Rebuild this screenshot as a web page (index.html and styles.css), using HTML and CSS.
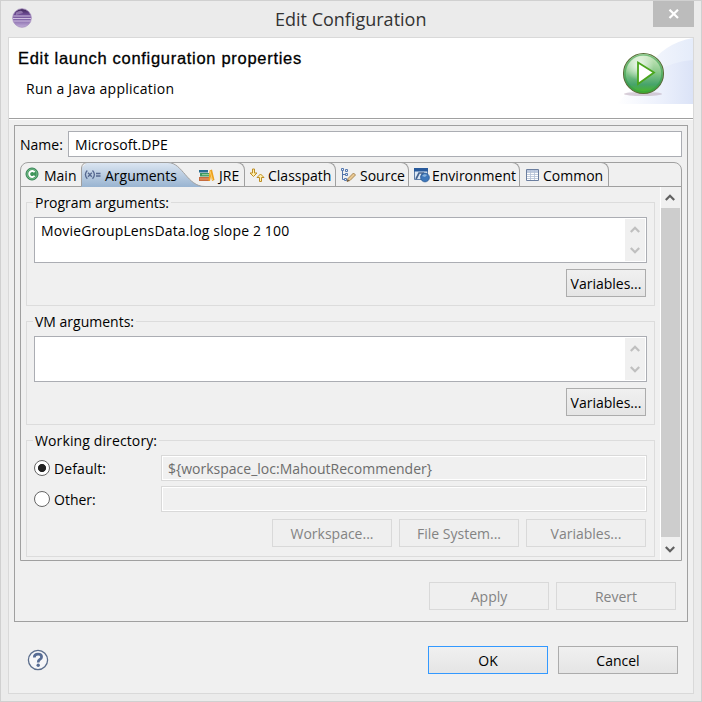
FILE: index.html
```
<!DOCTYPE html>
<html lang="en">
<head>
<meta charset="utf-8">
<title>Edit Configuration</title>
<link rel="stylesheet" href="styles.css">
</head>
<body>
<div class="window">
  <header class="titlebar">
    <svg class="app-icon" width="20" height="20" viewBox="0 0 20 20">
      <defs><linearGradient id="ecl" x1="0" y1="0" x2="0" y2="1"><stop offset="0" stop-color="#3d2456"/><stop offset=".3" stop-color="#6d4b93"/><stop offset=".65" stop-color="#8a6eae"/><stop offset="1" stop-color="#c3b0da"/></linearGradient></defs>
      <circle cx="10" cy="10" r="9.300" fill="url(#ecl)" stroke="#a58dbe" stroke-width=".8"/>
      <path d="M4 4.500Q10 1 11 5L4 7Z" fill="#a78dbd" opacity=".7"/>
      <path d="M1.500 8h17M1 10.500h18M1.500 13h17" stroke="#d9cbe8" stroke-width=".9"/>
    </svg>
    <h1 class="title"><span class="t-title">Edit Configuration</span></h1>
    <div class="close"><svg width="12" height="10" viewBox="0 0 12 10"><path d="M1.500 .7L10 9M10 .7L1.500 9" stroke="#fff" stroke-width="2.200"/></svg></div>
  </header>
  <main class="client">
    <section class="banner">
      <div class="banner-text">
        <h2><span class="t-head">Edit launch configuration properties</span></h2>
        <p><span class="t-run">Run a Java application</span></p>
      </div>
      <svg class="banner-art" width="76" height="66" viewBox="0 0 76 66">
        <defs>
          <linearGradient id="sweep" x1="0" y1="0" x2="1" y2="0"><stop offset="0" stop-color="#fff"/><stop offset=".55" stop-color="#edf1fc"/><stop offset="1" stop-color="#dbe3f7"/></linearGradient>
          <linearGradient id="sweep2" x1="0" y1="0" x2="1" y2="0"><stop offset=".3" stop-color="#f6f8fd"/><stop offset="1" stop-color="#e5ecfa"/></linearGradient>
          <linearGradient id="ball" x1="0" y1="0" x2="0" y2="1"><stop offset="0" stop-color="#d5edc7"/><stop offset=".45" stop-color="#8cca8d"/><stop offset=".78" stop-color="#46a36a"/><stop offset="1" stop-color="#4cba19"/></linearGradient>
          <radialGradient id="shine" cx=".38" cy=".3" r=".45"><stop offset="0" stop-color="#fff" stop-opacity=".85"/><stop offset="1" stop-color="#fff" stop-opacity="0"/></radialGradient>
        </defs>
        <path d="M30 30Q47 5 76 0V66H2Q20 55 30 30Z" fill="url(#sweep2)"/>
        <path d="M0 66Q35 25 76 22V66Z" fill="url(#sweep)"/>
        <ellipse cx="26" cy="56" rx="19" ry="2" fill="#b9a8b8" opacity=".55"/>
        <circle cx="26.500" cy="35.500" r="20" fill="url(#ball)" stroke="#596c38" stroke-width="1.100"/>
        <circle cx="26.500" cy="35.500" r="18.500" fill="none" stroke="#329c46" stroke-width="1.600" opacity=".55"/>
        <circle cx="26" cy="34" r="16.500" fill="url(#shine)"/>
        <path d="M21 24.500L37 34.500L21 46Z" fill="#fff" stroke="#4aa51c" stroke-width="1.800"/>
      </svg>
    </section>
    <section class="panel">
      <div class="name-row"><label><span class="t-name">Name:</span></label><div class="field name-field"><span class="t-ms">Microsoft.DPE</span></div></div>
      <div class="folder">
        <nav class="tabs">
          <div class="tab main">
            <svg width="14" height="14" viewBox="0 0 14 14"><circle cx="7" cy="7" r="6" fill="#3f965b" stroke="#2f8050"/><circle cx="7" cy="7" r="5" fill="none" stroke="#9bd0a8" stroke-width=".6"/><path d="M9.600 5.200A3 3 0 1 0 9.600 8.800" fill="none" stroke="#fff" stroke-width="1.900"/></svg>
            <span class="t-main">Main</span></div>
          <div class="tab active">
            <svg class="active-shape" width="124" height="25" viewBox="0 0 124 25">
              <defs><linearGradient id="tabfill" x1="0" y1="0" x2="0" y2="1"><stop offset="0" stop-color="#dce6f2"/><stop offset="1" stop-color="#99b4d1"/></linearGradient></defs>
              <path d="M.5 25V6L6 .5H89C101 2 107 24.500 124 24.500V25Z" fill="url(#tabfill)"/>
              <path d="M.5 24V6Q1 1 6 .5H87C102 1 106 24.500 124 24.500" fill="none" stroke="#a0a0a0"/>
            </svg>
            <svg class="var-icon" width="17" height="12" viewBox="0 0 17 12" fill="none" stroke="#566890" stroke-width="1.300"><path d="M3.300 1.500Q-.5 5.500 3.300 9.800M8.500 1.500Q12.300 5.500 8.500 9.800M4 3.700L7.800 7.800M7.800 3.700L4 7.800M12 4.500H16.500M12 7H16.500"/></svg>
            <span class="t-args">Arguments</span></div>
          <div class="tab jre">
            <svg width="16" height="14" viewBox="0 0 16 14"><path d="M0 9H11V13H0Z" fill="#c66b3e"/><path d="M1 5H10V8.500H1Z" fill="#3e9862"/><path d="M0 2H9V4.500H0Z" fill="#276c91"/><path d="M1 11H10" stroke="#e7a46f"/><path d="M3 6.700H10" stroke="#a7d7a1"/><path d="M10.500 2.500L13 1.500L15.500 12L13 13L12 8L11 13H9.500Z" fill="#eda11e"/><path d="M11 3L13.500 12" stroke="#ffd26a"/></svg>
            <span class="t-jre">JRE</span></div>
          <div class="tab cp">
            <svg width="16" height="15" viewBox="0 0 16 15" fill="#fff1b0" stroke="#be8d22"><path d="M3.500 1H5.500V5H8L4.500 8.500L1 5H3.500ZM10.500 13.500H12.500V9.500H15L11.500 6L8 9.500H10.500Z"/></svg>
            <span class="t-cp">Classpath</span></div>
          <div class="tab src">
            <svg width="16" height="16" viewBox="0 0 16 16"><path d="M2.500 2V12.500H6M2.500 7.500H5" fill="none" stroke="#5273a8"/><path d="M1.500 1.500h2v2h-2ZM5.500 2.500h2v2h-2ZM5.500 6.500h2v2h-2ZM4.500 11.500h2v2h-2Z" fill="#e8f0fc" stroke="#5779af"/><path d="M7 14.500L8 11.500L13.500 6L15.500 8L10 13.500Z" fill="#e9c892" stroke="#98733c" stroke-width=".8"/><path d="M7 14.500l1-2 1 1Z" fill="#333"/></svg>
            <span class="t-src">Source</span></div>
          <div class="tab env">
            <svg width="16" height="15" viewBox="0 0 16 15"><path d="M.5.5H13.500V11.500H.5Z" fill="#dce8f5" stroke="#617fa8"/><path d="M0 0H14V3.500H0Z" fill="#285a9c"/><path d="M2 11L5 5H9L7 9" fill="none" stroke="#47648f" stroke-width="1.700"/><circle cx="11" cy="9.500" r="4.400" fill="#3e77ba" stroke="#285890" stroke-width=".7"/><path d="M8 8Q10 5 13 7L11 9Z" fill="#8ab3dc"/></svg>
            <span class="t-env">Environment</span></div>
          <div class="tab com">
            <svg width="13" height="12" viewBox="0 0 13 12"><path d="M.5.5H12.500V11.500H.5Z" fill="#fff" stroke="#6b7e9f"/><path d="M1 1H12V3H1Z" fill="#bdc9df"/><path d="M1 3.500H12M1 5.500H12M1 7.500H12M1 9.500H12M4.500 1V11M8.500 1V11" stroke="#b3bfd4" stroke-width=".8"/></svg>
            <span class="t-com">Common</span></div>
        </nav>
        <div class="page">
          <div class="groups">
            <fieldset class="group">
              <legend><span class="t-pa">Program arguments:</span></legend>
              <div class="area"><div class="area-text"><span class="t-movie">MovieGroupLensData.log slope 2 100</span></div>
                <div class="mini"><svg width="10" height="7" viewBox="0 0 10 7"><path d="M.8 6L5 1.800L9.200 6"/></svg><svg width="10" height="7" viewBox="0 0 10 7"><path d="M.8 1L5 5.200L9.200 1"/></svg></div></div>
              <div class="actions"><button class="btn small"><span class="t-var">Variables...</span></button></div>
            </fieldset>
            <fieldset class="group">
              <legend><span class="t-vm">VM arguments:</span></legend>
              <div class="area"><div class="area-text"></div>
                <div class="mini"><svg width="10" height="7" viewBox="0 0 10 7"><path d="M.8 6L5 1.800L9.200 6"/></svg><svg width="10" height="7" viewBox="0 0 10 7"><path d="M.8 1L5 5.200L9.200 1"/></svg></div></div>
              <div class="actions"><button class="btn small"><span class="t-var">Variables...</span></button></div>
            </fieldset>
            <fieldset class="group work">
              <legend><span class="t-wd">Working directory:</span></legend>
              <div class="radio-row"><i class="radio on"></i><label><span class="t-def">Default:</span></label><div class="field off"><span class="t-loc">${workspace_loc:MahoutRecommender}</span></div></div>
              <div class="radio-row"><i class="radio"></i><label><span class="t-oth">Other:</span></label><div class="field off"></div></div>
              <div class="actions"><button class="btn" disabled><span class="t-ws">Workspace...</span></button><button class="btn" disabled><span class="t-fs">File System...</span></button><button class="btn" disabled><span class="t-var">Variables...</span></button></div>
            </fieldset>
          </div>
          <div class="scroll"><div class="arrow"><svg width="10" height="7" viewBox="0 0 10 7"><path d="M.8 6L5 1.800L9.200 6"/></svg></div><div class="thumb"></div><div class="arrow down"><svg width="10" height="7" viewBox="0 0 10 7"><path d="M.8 1L5 5.200L9.200 1"/></svg></div></div>
        </div>
      </div>
      <div class="panel-actions"><button class="btn" disabled><span class="t-apply">Apply</span></button><button class="btn" disabled><span class="t-rev">Revert</span></button></div>
    </section>
    <footer class="footer">
      <svg class="help" width="22" height="22" viewBox="0 0 22 22"><circle cx="11" cy="11" r="9.600" fill="#f6f6f8" stroke="#5b6d8c" stroke-width="1.300"/><path d="M7.300 8.500Q7.300 5.200 11 5.200Q14.600 5.200 14.600 8Q14.600 9.500 12.600 10.700Q11.200 11.600 11.200 13.400" fill="none" stroke="#576c94" stroke-width="2.700"/><circle cx="11.200" cy="16.300" r="1.700" fill="#576c94"/></svg>
      <button class="btn ok"><span class="t-ok">OK</span></button><button class="btn"><span class="t-can">Cancel</span></button>
    </footer>
  </main>
</div>
</body>
</html>
```
FILE: styles.css
```
* { box-sizing: border-box; }
body { margin: 0; width: 702px; height: 702px; overflow: hidden; font: 14px/20px "Open Sans", "Noto Sans", sans-serif; color: #000; }
h1, h2, p { margin: 0; font-weight: 400; }
span { white-space: nowrap; }
svg { display: block; flex: none; }
.t-run { letter-spacing: .25px; }
.t-movie { letter-spacing: .15px; }
.t-wd { letter-spacing: .12px; }
.t-pa { letter-spacing: -.04px; }
.t-ms { letter-spacing: .08px; }
.t-def { letter-spacing: .1px; }
.window { width: 702px; height: 702px; border: 1px solid #d0d0d0; background: #ebebeb; padding: 0 7px 7px; }
.titlebar { height: 36px; display: flex; justify-content: space-between; align-items: flex-start; }
.app-icon { margin: 7px 0 0 4px; }
.title { font-size: 18px; line-height: 36px; color: #333; flex: 1; padding-left: 243px; }
.close { width: 41px; height: 26px; background: #bcbcbc; display: flex; align-items: center; justify-content: center; }
.client { width: 686px; height: 657px; border: 1px solid #d9d9d9; background: #f0f0f0; }
.banner { height: 82px; background: #fff; border-bottom: 1px solid #fff; box-shadow: inset 0 -1px #a0a0a0; display: flex; justify-content: space-between; }
.banner-text { padding: 10px 0 0 9px; }
.banner h2 { font: 16.500px/20px "Liberation Sans", sans-serif; letter-spacing: .7px; -webkit-text-stroke: .3px #000; }
.banner p { margin: 11px 0 0 8px; }
.panel { margin: 5px 5px 0; width: 674px; height: 497px; border: 1px solid #a0a0a0; padding: 5px; }
.name-row { display: flex; height: 26px; align-items: center; }
.name-row label { width: 48px; padding-top: 1px; }
.field { height: 26px; border: 1px solid #abadb3; background: #fff; line-height: 25px; padding-left: 6px; }
.name-field { width: 614px; }
.folder { margin-top: 5px; width: 662px; height: 399px; border: 1px solid #a0a0a0; border-radius: 8px 8px 0 0; }
.tabs { height: 24px; border-bottom: 1px solid #a0a0a0; display: flex; }
.tab { position: relative; margin-top: -1px; height: 25px; border-top: 1px solid #a0a0a0; border-right: 1px solid #a0a0a0; border-top-right-radius: 8px; display: flex; align-items: center; padding-left: 5px; line-height: 24px; }
.tab svg { position: relative; }
.tab span { position: relative; padding-top: 2px; }
.tab .active-shape { position: absolute; left: 0; top: 0; }
.tab.main { width: 60px; border-right: 0; padding-left: 4px; gap: 5px; border-top: 0; }
.tab.main svg { top: -1px; }
.tab.active { width: 115px; border: 0; padding-left: 3px; gap: 4px; z-index: 1; }
.tab.jre { width: 49px; padding-left: 3px; gap: 4px; }
.tab.cp { width: 91px; padding-left: 4px; gap: 3px; }
.tab.src { width: 73px; padding-left: 4px; gap: 4px; }
.tab.env { width: 111px; gap: 2px; }
.tab.com { width: 89px; padding-left: 6px; gap: 4px; }
.page { height: 373px; display: flex; justify-content: space-between; }
.groups { padding: 15px 0 0 5px; }
.group { position: relative; width: 629px; height: 104px; border: 1px solid #dcdcdc; margin: 0 0 15px; padding: 14px 7px 0; }
.group legend { position: absolute; left: 6px; top: -11px; padding: 0 2px; background: #f0f0f0; height: 22px; line-height: 22px; }
.group.work { height: 117px; margin: 0; }
.area { width: 613px; height: 46px; border: 1px solid #abadb3; background: #fff; display: flex; justify-content: space-between; padding: 1px; }
.area-text { padding: 2px 0 0 5px; }
.mini { width: 20px; height: 42px; background: #f0f0f0; display: flex; flex-direction: column; justify-content: space-between; align-items: center; padding: 7px 1px 7px 0; }
.mini path { fill: none; stroke: #bfbfbf; stroke-width: 2.200; }
.actions { margin-top: 6px; padding-right: 1px; width: 613px; display: flex; justify-content: flex-end; gap: 7px; }
.btn { width: 120px; height: 28px; padding: 2px 0 0; border: 1px solid #acacac; border-radius: 0; background: linear-gradient(#f0f0f0, #e5e5e5); font: inherit; color: #000; display: flex; align-items: center; justify-content: center; }
.btn.small { width: 80px; }
.btn:disabled { border-color: #d9d9d9; background: #efefef; color: #838383; }
.btn.ok { border-color: #3399ff; }
.radio-row { height: 26px; display: flex; align-items: center; margin-bottom: 5px; }
.radio { width: 16px; height: 16px; border: 1px solid #666; border-radius: 50%; background: #fff; }
.radio.on { background: radial-gradient(circle, #222 0 3.700px, #fff 4.400px); }
.radio-row label { width: 111px; padding: 2px 0 0 4px; }
.radio-row .field { width: 486px; }
.field.off { background: #f0f0f0; border-color: #d9d9d9; box-shadow: inset 0 0 0 1px #fff; color: #6d6d6d; }
.work .actions { margin-top: 7px; }
.scroll { width: 21px; height: 373px; border-left: 1px solid #fff; border-right: 1px solid #f0f0f0; display: flex; flex-direction: column; }
.arrow { height: 21px; display: flex; align-items: center; justify-content: center; padding-right: 1px; }
.arrow.down { padding-top: 3px; }
.arrow path { fill: none; stroke: #606060; stroke-width: 2.200; }
.thumb { height: 329px; background: #cdcdcd; }
.panel-actions { margin: 21px 6px 0 0; display: flex; justify-content: flex-end; gap: 7px; }
.footer { height: 28px; margin: 24px 15px 0 18px; display: flex; gap: 10px; align-items: center; }
.help { margin-right: auto; }
```
